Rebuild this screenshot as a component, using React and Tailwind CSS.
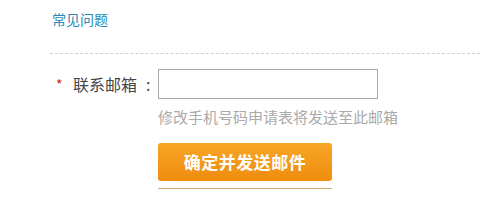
import React from "react";

export default function App() {
  const font = { fontFamily: '"Microsoft YaHei", "Noto Sans CJK SC", sans-serif' };
  return (
    <div className="w-[480px] h-[201px] bg-white overflow-hidden" style={font}>
      <div className="pl-[52px] pt-[6px]">
        <a className="text-[14px] leading-[20px] text-[#2b8ab5]">常见问题</a>
      </div>
      <div className="ml-[50px] mt-[23px] border-t border-dashed border-[#d0d0d0]"></div>

      <div className="flex items-center mt-[15px] pl-[56px]">
        <span className="text-[#c81e1e] text-[14px] w-[17px] leading-none">*</span>
        <span className="text-[16px] text-[#444]">联系邮箱</span>
        <span className="text-[16px] text-[#444] ml-[9px] w-[12px]">:</span>
        <input
          type="text"
          className="w-[220px] h-[30px] border border-[#a8a8a8] outline-none px-2 text-sm"
        />
      </div>
      <p className="ml-[158px] mt-[8px] text-[15px] leading-[20px] text-[#aaa] whitespace-nowrap">
        修改手机号码申请表将发送至此邮箱
      </p>

      <div className="ml-[158px] mt-[16px] w-[174px] pb-[7px] border-b border-[#d6a86e]">
        <button className="w-[174px] h-[38px] rounded-[3px] bg-gradient-to-b from-[#f7a626] to-[#ef8c0c] text-white font-bold text-[17px] tracking-[0.5px]">
          确定并发送邮件
        </button>
      </div>
    </div>
  );
}
